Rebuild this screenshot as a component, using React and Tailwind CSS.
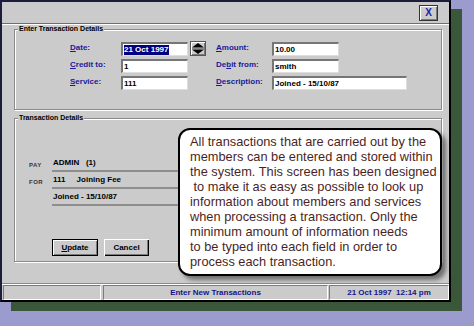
import React from "react";

const blue = "text-[#1a1a99]";

function Field({ width = "w-[67px]", children }) {
  return (
    <div
      className={`flex h-[14px] ${width} items-center overflow-hidden border-t-2 border-l-2 border-b border-r border-t-[#767676] border-l-[#767676] border-b-[#dedede] border-r-[#dedede] bg-white pl-[1px] text-[8px] font-bold leading-[10px] text-black`}
    >
      {children}
    </div>
  );
}

function Label({ width, u, rest }) {
  return (
    <div className={`${width} pb-[3px] text-[8px] font-bold leading-[10px] ${blue}`}>
      <span className="underline">{u}</span>
      {rest}
    </div>
  );
}

function Spinner() {
  return (
    <div className="ml-[2px] -mt-[1px] h-[15px] w-[16px] border border-[#555] bg-[#cbcbcb] shadow-[inset_1px_1px_0_#fff,inset_-1px_-1px_0_#7b7b7b]">
      <svg width="14" height="13" viewBox="0 0 14 13">
        <polygon points="7,1 13,5.5 1,5.5" fill="#000" />
        <line x1="1" y1="6.5" x2="13" y2="6.5" stroke="#8a8a8a" strokeWidth="1" />
        <polygon points="1,7.5 13,7.5 7,12" fill="#000" />
      </svg>
    </div>
  );
}

function GroupLabel({ children }) {
  return (
    <div className="-mt-[5px] ml-[3px] h-[8px] w-fit bg-[#cbcbcb] px-[1px] text-[7px] font-bold leading-[8px] text-black">
      {children}
    </div>
  );
}

function DetailRow({ tag, children }) {
  return (
    <div className="flex h-[17px] items-end pl-[14px]">
      <div className="w-[23px] pb-[3px] text-[6px] font-bold leading-[8px] tracking-[0.5px] text-[#333]">
        {tag}
      </div>
      <div className="flex h-[17px] w-[220px] items-end border-b-2 border-[#8e8e8e] pb-[2px] pl-[1px] text-[8px] font-bold leading-[10px] text-black whitespace-pre">
        {children}
      </div>
    </div>
  );
}

const note = [
  "All transactions that are carried out by the",
  "members can be entered and stored within",
  "the system. This screen has been designed",
  " to make it as easy as possible to look up",
  "information about members and services",
  "when processing a transaction. Only the",
  "minimum amount of information needs",
  "to be typed into each field in order to",
  "process each transaction.",
];

export default function App() {
  return (
    <div className="relative h-[326px] w-[474px] overflow-hidden bg-[#9c9bcd] font-['Liberation_Sans',Arial,sans-serif]">
      <div className="flex h-[302px] w-[451px] flex-col border-2 border-t-[#1c1c3c] border-l-[#1c1c3c] border-r-black border-b-black bg-[#cbcbcb] shadow-[11px_9px_0_#3a573a]">
        <div className="flex h-[21px] shrink-0 justify-end">
          <div className="mt-[3px] mr-[11px] flex h-[16px] w-[19px] items-center justify-center border border-[#333] shadow-[inset_1px_1px_0_#fff,inset_-1px_-1px_0_#7b7b7b] text-[10px] font-bold leading-none text-[#2020a8]">
            X
          </div>
        </div>
        <div className="h-px shrink-0 bg-[#6e6e6e]" />
        <div className="h-px shrink-0 bg-white" />

        <div className="mt-[4px] ml-[12px] mr-[7px] h-[81px] shrink-0 border border-[#8a8a8a] shadow-[1px_1px_0_#fff,inset_1px_1px_0_#fff]">
          <GroupLabel>Enter Transaction Details</GroupLabel>
          <div className="mt-[9px] flex flex-col gap-[3px] pl-[55px]">
            <div className="flex h-[14px] items-center">
              <Label width="w-[51px]" u="D" rest="ate:" />
              <Field>
                <span className="bg-[#000080] pr-[1px] text-white">21 Oct 1997</span>
              </Field>
              <Spinner />
              <div className="ml-[10px]">
                <Label width="w-[56px]" u="A" rest="mount:" />
              </div>
              <Field>10.00</Field>
            </div>
            <div className="flex h-[14px] items-center">
              <Label width="w-[51px]" u="C" rest="redit to:" />
              <Field>1</Field>
              <div className="ml-[2px] w-[16px]" />
              <div className="ml-[10px] w-[56px] pb-[3px] text-[8px] font-bold leading-[10px] text-[#1a1a99]">
                De<span className="underline">b</span>it from:
              </div>
              <Field>smith</Field>
            </div>
            <div className="flex h-[14px] items-center">
              <Label width="w-[51px]" u="S" rest="ervice:" />
              <Field>111</Field>
              <div className="ml-[2px] w-[16px]" />
              <div className="ml-[10px]">
                <Label width="w-[56px]" u="D" rest="escription:" />
              </div>
              <Field width="w-[135px]">Joined - 15/10/87</Field>
            </div>
          </div>
        </div>

        <div className="mt-[8px] ml-[12px] mr-[7px] h-[144px] shrink-0 border border-[#8a8a8a] shadow-[1px_1px_0_#fff,inset_1px_1px_0_#fff]">
          <GroupLabel>Transaction Details</GroupLabel>
          <div className="mt-[33px]">
            <DetailRow tag="PAY">{"ADMIN   (1)"}</DetailRow>
            <DetailRow tag="FOR">{"111     Joining Fee"}</DetailRow>
            <DetailRow tag="">{"Joined - 15/10/87"}</DetailRow>
          </div>
          <div className="mt-[33px] ml-[37px] flex gap-[6px]">
            <div className="flex h-[17px] w-[46px] items-center justify-center border border-black shadow-[inset_1px_1px_0_#fff,inset_-1px_-1px_0_#7b7b7b] text-[8px] font-bold leading-none text-black">
              <span className="underline">U</span>pdate
            </div>
            <div className="flex h-[17px] w-[45px] items-center justify-center shadow-[inset_1px_1px_0_#fff,inset_-1px_-1px_0_#000,inset_-2px_-2px_0_#7b7b7b] text-[8px] font-bold leading-none text-black">
              Cancel
            </div>
          </div>
        </div>

        <div className="mt-[21px] h-px shrink-0 bg-[#8a8a8a]" />
        <div className="h-px shrink-0 bg-white" />
        <div className="flex h-[15px] shrink-0 text-[8px] font-bold leading-none text-[#14148c]">
          <div className="ml-[1px] w-[98px] border border-t-[#7b7b7b] border-l-[#7b7b7b] border-b-white border-r-white" />
          <div className="ml-[2px] flex w-[225px] items-center justify-center border border-t-[#7b7b7b] border-l-[#7b7b7b] border-b-white border-r-white">
            Enter New Transactions
          </div>
          <div className="ml-[1px] flex w-[120px] items-center justify-center whitespace-pre border border-t-[#7b7b7b] border-l-[#7b7b7b] border-b-white border-r-white">
            {"21 Oct 1997  12:14 pm"}
          </div>
        </div>
      </div>

      <div className="absolute left-[178px] top-[128px] h-[148px] w-[264px] rounded-[12px] border-2 border-black bg-white pl-[10px] pt-[4px] shadow-[4px_4px_4px_rgba(0,0,0,0.45)]">
        {note.map((line, i) => (
          <div key={i} className="whitespace-pre text-[12.8px] leading-[15px] text-[#4b1f1f]">
            {line}
          </div>
        ))}
      </div>
    </div>
  );
}
